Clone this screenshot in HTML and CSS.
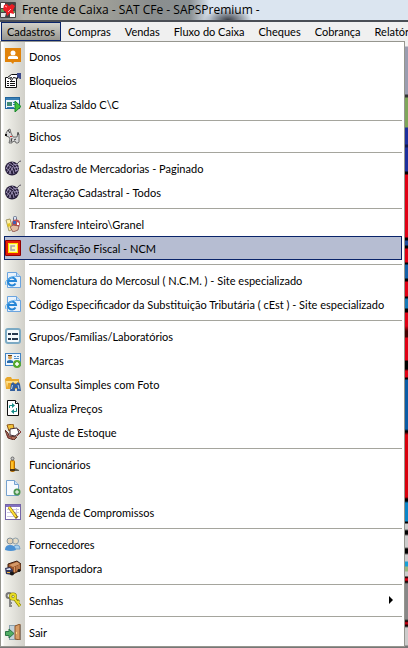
FILE: index.html
```html
<!DOCTYPE html>
<html lang="pt-BR">
<head>
  <meta charset="UTF-8" />
  <title>Frente de Caixa - SAT CFe - SAPSPremium</title>
  <meta name="viewport" content="width=device-width, initial-scale=1.0" />
  <link rel="stylesheet" href="styles.css">
</head>
<body>
  <header class="titlebar">
    <svg class="icon" viewBox="0 0 16 16"><rect width="16" height="16" rx="1" fill="#444"/><path d="M1 1h4v5H1zM10 11h5v4h-5z" fill="#fff"/><path d="M1 7h3v3H1zM12 9h3v2h-3z" fill="#58a05a"/><path d="M1 11h5l-1 4H1z" fill="#e4e6e9"/><path d="M4 3l3-1 2 2 3-2 3 2-2 4 1 4-4-1-3 3-1-4-3-2z" fill="#ed1c24"/><path d="M5 4l2 1M8 10l3-3" stroke="#ffb4b4"/></svg>
    <h1>Frente de Caixa - SAT CFe - SAPSPremium -</h1>
  </header>

  <nav class="menubar">
    <button class="menu-button open">Cadastros</button>
    <button class="menu-button">Compras</button>
    <button class="menu-button">Vendas</button>
    <button class="menu-button">Fluxo do Caixa</button>
    <button class="menu-button">Cheques</button>
    <button class="menu-button">Cobrança</button>
    <button class="menu-button">Relatórios</button>
  </nav>

  <main class="workspace">
    <ul class="menu">
      <li><button class="item">
        <svg class="icon" viewBox="0 0 16 16"><path d="M0 0h16v14H9l-1 2-2-2H0z" fill="#e18309"/><circle cx="8" cy="5" r="2.500" fill="#fff"/><path d="M3 11V9q2-2 5-1 3-1 5 1v2z" fill="#fff"/></svg>
        Donos</button></li>
      <li><button class="item">
        <svg class="icon" viewBox="0 0 16 16"><path d="M.5 5.500h11v10H.5z" fill="#fff" stroke="#111"/><path d="M2 9.500h2M5 9.500h5M2 11.500h2M5 11.500h5M2 13.500h2M5 13.500h5" stroke="#111"/><path d="M2.500 5.500l4-3h6v4l-4-1-2 3-1-1 1-2-3 1z" fill="#fff" stroke="#111"/><path d="M12 1h4v6h-1l-3-2z" fill="#3c4a8c"/></svg>
        Bloqueios</button></li>
      <li><button class="item">
        <svg class="icon" viewBox="0 0 16 16"><rect x=".5" y="1.500" width="14" height="11" fill="#eaf4fb" stroke="#23659c"/><path d="M1 2h13v2H1z" fill="#397fb5"/><path d="M2 6h5v4H2z" fill="#418a72"/><path d="M8 6.500h4M8 8.500h2M2 11.500h7" stroke="#347bb5"/><path d="M10 5l6 5.500-6 5.500z" fill="#3fc13b" stroke="#19862a"/></svg>
        Atualiza Saldo C\C</button></li>
      <li class="separator"></li>
      <li><button class="item">
        <svg class="icon" viewBox="0 0 16 16"><path d="M1 5l2-3 2-1 1 4 2 4h4l1-4 1 1v8l-1 1h-2l-1-2-3 1v1H4l1-4-1-2-3-1z" fill="#d8d8d8" stroke="#555" stroke-width=".8"/><path d="M3 2l2 3M7 10l-1 4M13 7V4M9 12l2-1" stroke="#333"/><path d="M0 6h2v2H0z" fill="#111"/><path d="M5 8h2v1H5z" fill="#c33"/></svg>
        Bichos</button></li>
      <li class="separator"></li>
      <li><button class="item">
        <svg class="icon" viewBox="0 0 16 16"><circle cx="7" cy="8.500" r="7" fill="#29203d"/><path d="M2 5q6 2 7 9M4 3q6 3 7 9M7 2q5 3 6 8M1 8q4 2 5 6M2 12l4-6M4 14l4-7M8 5l5-1M9 8l5-1M10 11l3-1M1 9l3-5" stroke="#a397bb" stroke-width=".9" fill="none"/><path d="M11 3q1 2 2 0t3-2" stroke="#555060" fill="none"/></svg>
        Cadastro de Mercadorias - Paginado</button></li>
      <li><button class="item">
        <svg class="icon" viewBox="0 0 16 16"><circle cx="7" cy="8.500" r="7" fill="#29203d"/><path d="M2 5q6 2 7 9M4 3q6 3 7 9M7 2q5 3 6 8M1 8q4 2 5 6M2 12l4-6M4 14l4-7M8 5l5-1M9 8l5-1M10 11l3-1M1 9l3-5" stroke="#a397bb" stroke-width=".9" fill="none"/><path d="M11 3q1 2 2 0t3-2" stroke="#555060" fill="none"/></svg>
        Alteração Cadastral - Todos</button></li>
      <li class="separator"></li>
      <li><button class="item">
        <svg class="icon" viewBox="0 0 16 16"><path d="M1 4l4-1 3 10-4 2z" fill="#fff1a8" stroke="#a39a6a"/><path d="M2 8l3-1 1 3-3 1z" fill="#e2c321"/><rect x="8.500" y=".5" width="3" height="5" rx="1" fill="#d9e5f5" stroke="#68748c"/><circle cx="11" cy="7.500" r="4" fill="#c25252"/><path d="M8 5h3v3H8z" fill="#4260af"/><path d="M12 6l2 1v2h-2z" fill="#fff"/><path d="M5 11l3-2 6 1-1 4-5 2z" fill="#e3bda2" stroke="#7b3b38" stroke-width=".7"/></svg>
        Transfere Inteiro\Granel</button></li>
      <li><button class="item selected">
        <svg class="icon" viewBox="0 0 16 16"><rect width="16" height="16" rx="1" fill="#8e0000"/><rect x="1" y="1" width="14" height="14" fill="#e51b05"/><rect x="3" y="3" width="10" height="10" fill="#ffe500"/><rect x="4" y="4" width="8" height="8" fill="#fff7b0"/><path d="M10 6H6v4h4" fill="none" stroke="#a4a4aa" stroke-width="1.500"/></svg>
        Classificação Fiscal - NCM</button></li>
      <li class="separator"></li>
      <li><button class="item">
        <svg class="icon" viewBox="0 0 16 16"><path d="M2.500.5h9l4 4v11h-13z" fill="#e8f2fc" stroke="#6ba4df"/><path d="M11.500.5v4h4" fill="#bfdaf4" stroke="#6ba4df"/><path d="M10.500 11.500A4 4 0 1 1 11 9H4" fill="none" stroke="#2585d6" stroke-width="2"/><path d="M1 13Q-1 9 5 6t6-1" fill="none" stroke="#63b0ec"/></svg>
        Nomenclatura do Mercosul ( N.C.M. ) - Site especializado</button></li>
      <li><button class="item">
        <svg class="icon" viewBox="0 0 16 16"><path d="M2.500.5h9l4 4v11h-13z" fill="#e8f2fc" stroke="#6ba4df"/><path d="M11.500.5v4h4" fill="#bfdaf4" stroke="#6ba4df"/><path d="M10.500 11.500A4 4 0 1 1 11 9H4" fill="none" stroke="#2585d6" stroke-width="2"/><path d="M1 13Q-1 9 5 6t6-1" fill="none" stroke="#63b0ec"/></svg>
        Código Especificador da Substituição Tributária ( cEst ) - Site especializado</button></li>
      <li class="separator"></li>
      <li><button class="item">
        <svg class="icon" viewBox="0 0 16 16"><rect x="1" y="1" width="14" height="14" rx="2" fill="#f5fafd" stroke="#7caac4" stroke-width="2"/><path d="M3 5h3v2H3zM7 5h6v2H7zM3 10h3v2H3zM7 10h6v2H7z" fill="#26384f"/></svg>
        Grupos/Famílias/Laboratórios</button></li>
      <li><button class="item">
        <svg class="icon" viewBox="0 0 16 16"><rect x=".5" y="1.500" width="15" height="12" fill="#eef6ff" stroke="#4384c4"/><circle cx="5" cy="5.500" r="2" fill="#d8a052"/><path d="M3 4h4V3H3z" fill="#674115"/><path d="M2 11V9q3-2 6 0v2z" fill="#296cab"/><path d="M9 4.500h2M12 4.500h2M9 6.500h5" stroke="#5590c9"/><circle cx="12" cy="12" r="4" fill="#55a92c"/><path d="M12 10v4M10 12h4" stroke="#fff" stroke-width="1.500"/></svg>
        Marcas</button></li>
      <li><button class="item">
        <svg class="icon" viewBox="0 0 16 16"><path d="M0 3l2-2h4l1 2h7v3l1 1-2 6H1z" fill="#e9a92d"/><path d="M1 5h12v2H3l-1 5z" fill="#ffe08a"/><path d="M6 8l2-2 2 2h1l2-2 2 2 1 7h-4v-3h-2v3H5z" fill="#345f9d"/><path d="M7.500 9l-1 4M13 9l1 4" stroke="#b8d4f4"/></svg>
        Consulta Simples com Foto</button></li>
      <li><button class="item">
        <svg class="icon" viewBox="0 0 16 16"><path d="M2.500.5h8l3 3v12h-11z" fill="#fff" stroke="#111"/><path d="M10.500.5v3h3" fill="#fff" stroke="#111"/><path d="M4.500 8V5.500H8M11.500 8v3.500H8" fill="none" stroke="#168b86"/><path d="M7 3l3 2.500L7 8zM9 9l-3 2.500L9 14z" fill="#168b86"/></svg>
        Atualiza Preços</button></li>
      <li><button class="item">
        <svg class="icon" viewBox="0 0 16 16"><path d="M2 1l6-1 1 4-5 3z" fill="#f1c33b" stroke="#8d571d"/><path d="M0 6l3 3 1 3 8 1-3 3-6-2z" fill="#b07360" stroke="#62332b"/><path d="M5 5l7-1 2 5-4 3-5-1z" fill="#fff" stroke="#44313a"/><path d="M13 5l3 3-4 4M2 11l2 3M6 13l1 2" stroke="#8b3836" fill="none"/></svg>
        Ajuste de Estoque</button></li>
      <li class="separator"></li>
      <li><button class="item">
        <svg class="icon" viewBox="0 0 16 16"><path d="M8 15h6v-1l-4-2z" fill="#5c5c50"/><rect x="5.500" y="4.500" width="4" height="11" rx="1" fill="#f5a505" stroke="#b16c05"/><path d="M7 6v7" stroke="#ffdc5c"/><circle cx="7.500" cy="2.500" r="1.500" fill="#ccc" stroke="#666"/><path d="M5 13h5v2H5z" fill="#4d3412"/></svg>
        Funcionários</button></li>
      <li><button class="item">
        <svg class="icon" viewBox="0 0 16 16"><path d="M1.500.5h8l4 4v11h-12z" fill="#f8fbff" stroke="#75a1cf"/><path d="M9.500.5v4h4" fill="#d0e4f7" stroke="#75a1cf"/><circle cx="12" cy="12" r="3.500" fill="#4c9651"/><path d="M12 10v4M10 12h4" stroke="#fff"/></svg>
        Contatos</button></li>
      <li><button class="item">
        <svg class="icon" viewBox="0 0 16 16"><rect x=".5" y=".5" width="15" height="15" fill="#fff" stroke="#7464a8"/><path d="M1 1h14v2H1z" fill="#8270c0"/><path d="M2 5.500h12M2 8.500h12M2 12.500h12M11.500 4v11" stroke="#cdc7e4"/><path d="M4 3l8 11" stroke="#806412" stroke-width="3"/><path d="M4 3l7 10" stroke="#ffe036" stroke-width="2"/></svg>
        Agenda de Compromissos</button></li>
      <li class="separator"></li>
      <li><button class="item">
        <svg class="icon" viewBox="0 0 16 16"><circle cx="10.500" cy="5" r="3" fill="#e6dcc4" stroke="#8c9fac"/><path d="M8 13q0-4 4-4 3 0 3 4z" fill="#a8d0ed" stroke="#70a0ca"/><circle cx="5" cy="5" r="3" fill="#e4d3b7" stroke="#83919b"/><path d="M0 14q0-5 5-5t6 5q-5 2-11 0z" fill="#4c91d3"/></svg>
        Fornecedores</button></li>
      <li><button class="item">
        <svg class="icon" viewBox="0 0 16 16"><path d="M3 4l9-3 4 3v6l-8 4-5-4z" fill="#9b5529" stroke="#3f2012"/><path d="M4 5l8-3 3 2-7 3z" fill="#d59a69"/><path d="M9.500 7v5M12 6v5M14 5v4" stroke="#d59a69"/><path d="M0 8l5-1 3 3-1 5-6-1z" fill="#34385e"/><path d="M1 9l4-1 1 2H2z" fill="#dce3f4"/><path d="M2 12h3v1H2z" fill="#f2b53d"/><circle cx="7" cy="13.500" r="2" fill="#161616"/><circle cx="14" cy="10.500" r="1.500" fill="#161616"/></svg>
        Transportadora</button></li>
      <li class="separator"></li>
      <li><button class="item">
        <svg class="icon" viewBox="0 0 16 16"><circle cx="4" cy="3.500" r="2.500" fill="none" stroke="#777" stroke-width="2"/><path d="M5 6v9M4 11h3M4 14h3" stroke="#888" stroke-width="2"/><circle cx="8" cy="4.500" r="2.500" fill="none" stroke="#7d7900" stroke-width="3"/><path d="M9 6l6 8M11 11l3-3" stroke="#7d7900" stroke-width="3"/><circle cx="8" cy="4.500" r="2.500" fill="none" stroke="#e9dd25" stroke-width="2"/><path d="M9 6l6 8M12 11l2-2" stroke="#e9dd25" stroke-width="2"/></svg>
        Senhas
        <svg class="arrow" viewBox="0 0 4 8"><path d="M0 0l4 4-4 4z"/></svg></button></li>
      <li class="separator"></li>
      <li><button class="item">
        <svg class="icon" viewBox="0 0 16 16"><path d="M4 1h12v15H4z" fill="#8aa0ad"/><path d="M5 2h5v13H5z" fill="#c4d2da"/><path d="M10 2l5-2v16l-5-1z" fill="#d79c66" stroke="#8c572c"/><path d="M11.500 8v2" stroke="#ffe088"/><path d="M.5 7.500H4V5l5 4.500L4 14v-2.500H.5z" fill="#52ae63" stroke="#2c7548"/></svg>
        Sair</button></li>
    </ul>
  </main>
</body>
</html>
```
FILE: styles.css
```css
* {
  box-sizing: border-box;
}
body {
  margin: 0;
  overflow-x: hidden;
  background: #f0f0f0;
  color: #000;
  font-family: Lato, sans-serif;
  font-size: 11px;
}
button {
  border: 1px solid transparent;
  background: none;
  color: inherit;
  font: inherit;
  white-space: nowrap;
}
.icon {
  flex: none;
  width: 16px;
  height: 16px;
}
.titlebar {
  display: flex;
  align-items: center;
  gap: 6px;
  height: 22px;
  border-bottom: 2px solid #4a4e55;
  background:
    radial-gradient(ellipse 24px 12px at 228px 20px, #3c4048, transparent),
    linear-gradient(to right, #85888c, #b5b4ab 24px, #a8a79d 80px, #8b8e8e 150px, #8a9093 190px, #dbe5f0 210px, #dbe5f0);
}
.titlebar h1 {
  margin: 0;
  font-family: "Open Sans", sans-serif;
  font-size: 12px;
  font-weight: 400;
  line-height: 20px;
  white-space: nowrap;
}
.menubar {
  display: flex;
  height: 19px;
  padding-left: 1px;
  overflow: hidden;
}
.menu-button {
  flex: none;
  padding: 0 6px;
  line-height: 17px;
}
.menu-button.open {
  padding: 0 5px;
  border-color: #0a246a;
  background: linear-gradient(#d2d1ca, #96958e);
}
/* Window behind the open menu, visible along its right and bottom edges */
.workspace {
  padding: 0 3px 1px 0;
  background: linear-gradient(
    #f0f0f0 5px, #9a9db0 6px 53px, #333 54px 56px, #7fa65a 57px 86px,
    #1c2f9c 87px 103px, #101850 104px 106px, #1c2f9c 107px 130px, #000 131px 133px,
    #e00014 134px 196px, #000 197px 199px, #1c4b9c 200px 204px, #000 205px 207px,
    #e00014 208px 221px, #000 222px 223px, #1460a8 224px 237px, #000 238px 240px,
    #e00014 241px 255px, #000 256px 257px, #1478b8 258px 267px, #000 268px 271px,
    #e00014 272px 285px, #400 290px 296px, #e00014 297px 319px, #000 320px 328px,
    #e00014 330px 336px, #000 337px 338px, #0b5ba5 339px 388px, #000 390px 391px,
    #d8000c 394px 456px, #000 458px 460px, #0a85c8 462px 480px, #000 481px 482px,
    #ccc 483px 488px, #000 490px 493px, #ccc 495px 506px, #000 508px 512px,
    #ccc 514px 520px, #18a0d8 521px 525px, #9ab880 526px 530px, #ccc 531px 535px,
    #000 536px, #e00014 538px 539px, #000 541px, #888 543px 578px,
    #000 580px, #e00014 582px, #000 585px, #ccc 587px 604px, #777 605px);
}
.menu {
  margin: 0;
  padding: 2px 2px 2px 3px;
  border: 1px solid #96968f;
  list-style: none;
  background: linear-gradient(to right, #fff 2px, #f2f2ec 3px, #d1d0c9 24px, #fff 24px);
}
.item {
  display: flex;
  align-items: center;
  gap: 8px;
  width: 100%;
  height: 24px;
  padding: 0 8px 0 0;
  text-align: left;
}
.item.selected {
  border-color: #0a246a;
  background: #b6bdd2;
}
.separator {
  height: 8px;
  margin-left: 25px;
  background: linear-gradient(#a5a59d, #a5a59d) center / 100% 1px no-repeat;
}
.arrow {
  width: 4px;
  height: 8px;
  margin-left: auto;
}
```
